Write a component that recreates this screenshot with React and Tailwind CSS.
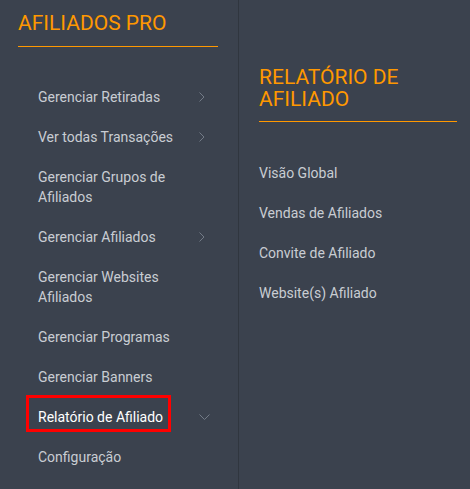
import { useState } from 'react'

const menu = [
  { label: 'Gerenciar Retiradas', icon: 'right' },
  { label: 'Ver todas Transações', icon: 'right' },
  { label: 'Gerenciar Grupos de Afiliados' },
  { label: 'Gerenciar Afiliados', icon: 'right' },
  { label: 'Gerenciar Websites Afiliados' },
  { label: 'Gerenciar Programas' },
  { label: 'Gerenciar Banners' },
  { label: 'Relatório de Afiliado', icon: 'down', active: true },
  { label: 'Configuração' },
]

const submenu = ['Visão Global', 'Vendas de Afiliados', 'Convite de Afiliado', 'Website(s) Afiliado']

function Chevron({ dir }) {
  if (dir === 'down') {
    return (
      <svg width="11" height="6" viewBox="0 0 11 6" className="text-[#737b87]">
        <polyline points="0.5,0.5 5.5,5.5 10.5,0.5" fill="none" stroke="currentColor" strokeWidth="1" />
      </svg>
    )
  }
  return (
    <svg width="6" height="10" viewBox="0 0 6 10" className="text-[#737b87]">
      <polyline points="0.5,0.5 5,5 0.5,9.5" fill="none" stroke="currentColor" strokeWidth="1" />
    </svg>
  )
}

export default function App() {
  const [active, setActive] = useState('Relatório de Afiliado')

  return (
    <div className="flex h-[489px] w-[470px] overflow-hidden bg-[#3b424e] font-['Roboto',sans-serif]">
      <aside className="w-[239px] shrink-0 border-r border-[#30363f] pl-[18px] pt-[12px]">
        <div className="w-[200px] pb-[12px]">
          <h2 className="text-[21px] leading-[22px] text-[#ff9800]">AFILIADOS PRO</h2>
        </div>
        <div className="h-px w-[200px] bg-[#ff9800]" />

        <ul className="mt-[30px]">
          {menu.map((item) => {
            const isActive = item.label === active
            return (
              <li
                key={item.label}
                onClick={() => setActive(item.label)}
                className="relative flex cursor-pointer items-center py-[10px] pl-[20px]"
              >
                <span
                  className={`w-[150px] text-[14px] leading-[20px] ${isActive ? 'text-white' : 'text-[#c9cdd3]'}`}
                >
                  {item.label}
                </span>
                {item.icon && (
                  <span className="absolute left-[181px] top-1/2 flex -translate-y-1/2 items-center">
                    <Chevron dir={item.icon} />
                  </span>
                )}
                {isActive && (
                  <span className="pointer-events-none absolute left-[8px] top-[-2px] h-[37px] w-[145px] border-[3px] border-[#ff0000]" />
                )}
              </li>
            )
          })}
        </ul>
      </aside>

      <section className="flex-1 pl-[20px] pt-[66px]">
        <div className="w-[198px] pb-[11px]">
          <h3 className="text-[21px] leading-[22px] text-[#ff9800]">RELATÓRIO DE AFILIADO</h3>
        </div>
        <div className="h-px w-[198px] bg-[#ff9800]" />

        <ul className="mt-[31px]">
          {submenu.map((label) => (
            <li key={label} className="cursor-pointer py-[10px] text-[14px] leading-[20px] text-[#c9cdd3]">
              {label}
            </li>
          ))}
        </ul>
      </section>
    </div>
  )
}
